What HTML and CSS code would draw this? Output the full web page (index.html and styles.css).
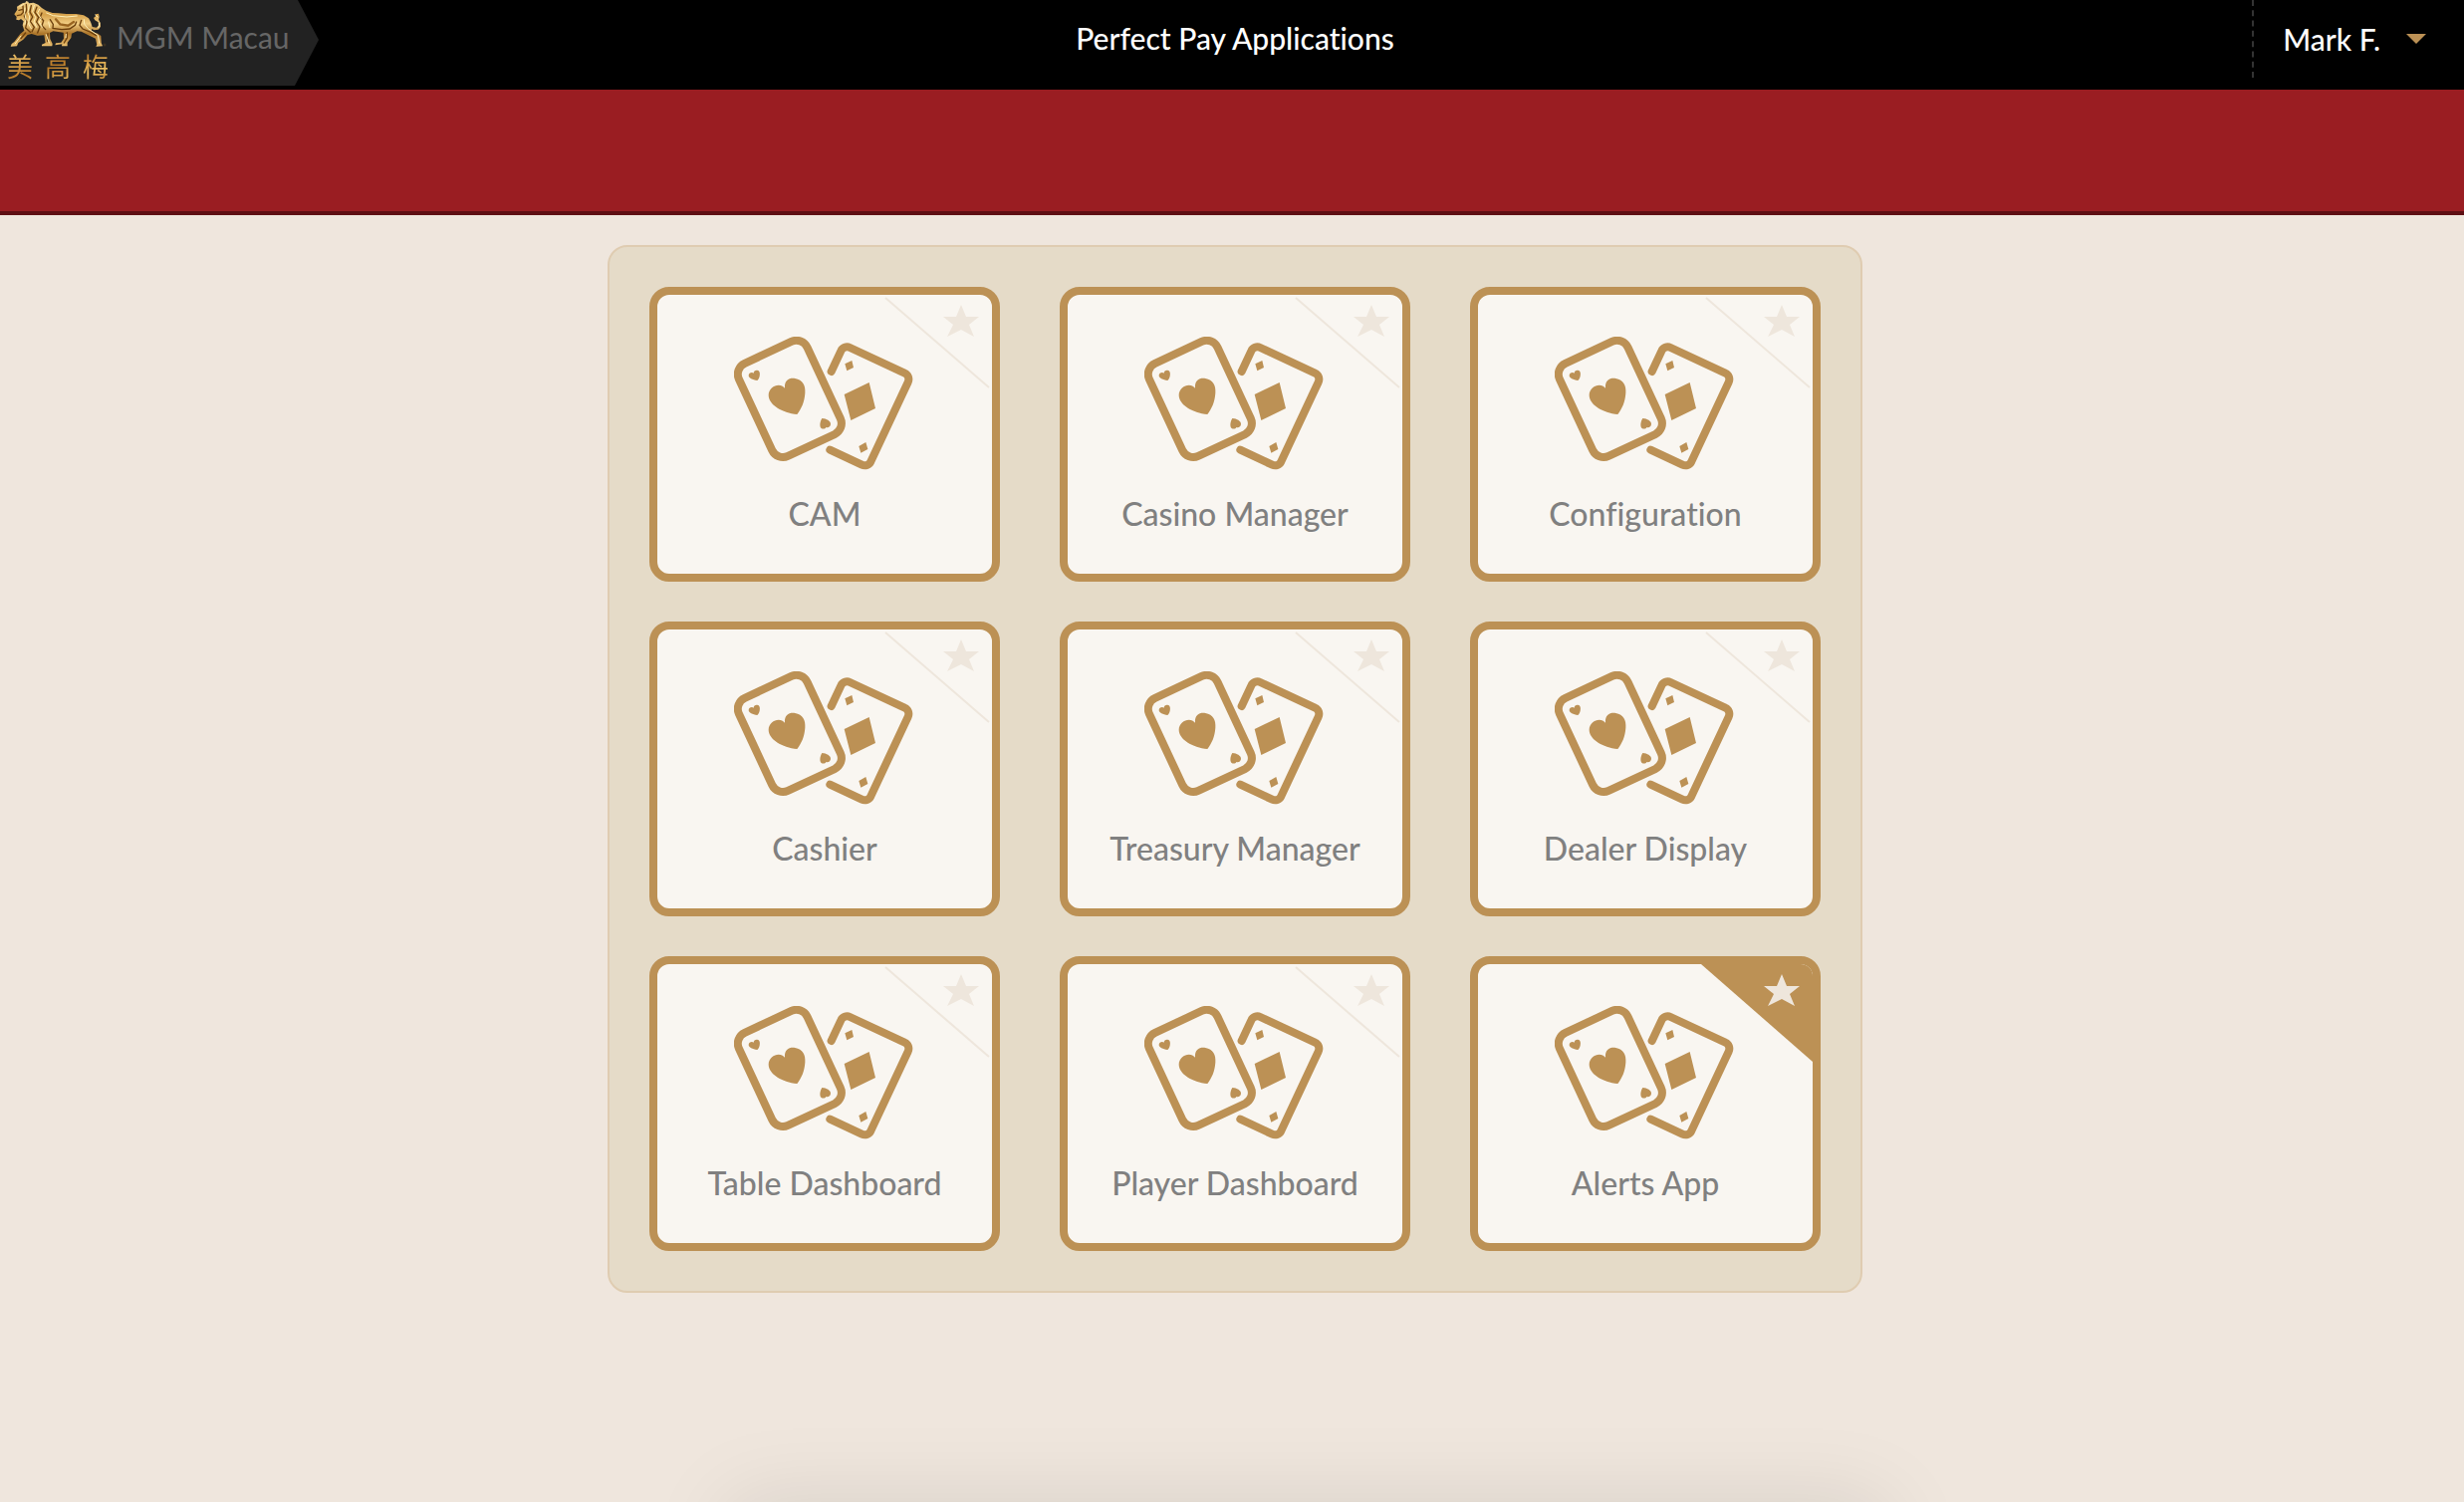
FILE: index.html
```html
<!DOCTYPE html>
<html lang="en">
<head>
<meta charset="utf-8">
<meta name="viewport" content="width=device-width, initial-scale=1">
<title>Perfect Pay Applications</title>
<link rel="stylesheet" href="styles.css">
</head>
<body>
<svg class="defs" aria-hidden="true">
  <symbol id="cards" viewBox="51 54 540 402">
    <g fill="none" stroke="currentColor" stroke-width="24" stroke-linecap="round">
      <rect x="105" y="87" width="227" height="308" rx="36" transform="rotate(-25 219 241)"/>
      <path d="M344 159L373 97A20 20 0 0 1 400 87L565 164A20 20 0 0 1 575 191L463 430A20 20 0 0 1 436 440L340 395"/>
    </g>
    <g fill="currentColor">
      <path d="M241 288C196 283 155 259 155 230C155 203 190 190 204 209C202 183 220 177 235 180C258 184 267 201 265 224C263 252 255 268 241 288Z"/>
      <path d="M121 186C107 184 95 179 95 171C95 162 106 160 110 164C110 157 117 154 123 156C130 158 129 168 128 173C127 179 124 182 121 186Z"/>
      <path d="M316 300C330 301 342 308 342 317C342 325 334 330 328 327C326 333 317 333 313 329C308 324 310 309 316 300Z"/>
      <path d="M458 192L477 270L403 306L383 228ZM406 126L411 147L391 157L385 136ZM448 372L454 393L433 404L427 384Z"/>
    </g>
  </symbol>
  <symbol id="corner" viewBox="0 0 112 98">
    <path class="corner-fill" d="M0 0H112V98Z"/>
    <path class="corner-line" d="M5 3L109 93"/>
    <path class="corner-star" d="M81 10L86 22H99L89 30L94 42L81 35L67 42L73 30L63 22H76Z"/>
  </symbol>
</svg>

<header class="topbar">
  <a class="brand" href="#">
    <span class="logo">
      <svg class="lion" viewBox="30 0 294 144" role="img" aria-label="Lion">
        <defs>
          <linearGradient id="gold" x1="0" y1="0" x2="0" y2="1">
            <stop offset="0" stop-color="#f3d591"/><stop offset=".3" stop-color="#d6a24c"/>
            <stop offset=".5" stop-color="#f1cd83"/><stop offset=".72" stop-color="#ac7428"/><stop offset="1" stop-color="#edc272"/>
          </linearGradient>
        </defs>
        <path fill="url(#gold)" d="M43 43L52 29L51 20L60 14L69 9L76 8L79 3L85 5L87 10L101 8L115 14L126 24L139 32L158 39L176 40L200 42L229 42L252 46L267 55L273 66L278 81L290 83L297 77L296 67L286 61L282 54L288 49L288 43L297 41L299 51L297 59L302 68L303 80L296 89L284 91L276 87L276 95L295 101L304 108L305 129L309 139L289 140L292 134L288 116L266 106L245 95L232 94L216 101L214 114L203 128L203 139L186 139L187 133L166 136L168 130L184 128L192 116L191 98L160 94L150 99L151 117L158 132L157 139L126 139L126 134L137 129L133 106L113 107L95 102L83 105L70 119L55 129L51 139L32 140L35 132L43 126L61 102L73 92L68 76L71 64L63 57L57 61L49 59L50 51Z"/>
        <g fill="none" stroke-linecap="round">
          <g stroke="#6b3f0d" stroke-width="4">
            <path d="M57 31L66 29M52 47L63 45L70 37L69 18M79 13L80 31L73 48L81 66L77 84L91 97M94 17L90 36L98 51L91 64L103 82L96 96M111 21L105 37L116 52L110 66L120 81L113 99M126 39L121 52L131 62L126 77L137 89"/>
            <path d="M151 59L160 73L159 85L186 89L210 87L226 76L230 66M245 61L240 76L249 87L271 96L289 106M202 98L202 114L193 129M144 101L143 125M77 99L63 116"/>
          </g>
          <g stroke="#fff0b8" stroke-width="3">
            <path d="M60 19L70 14M75 24L74 38L78 58L75 73M88 15L84 37L89 51L86 72L94 86M103 16L98 35L107 52L102 66L110 82M119 28L113 39L124 56L118 66L127 82"/>
            <path d="M140 39L160 47L201 51L232 48M146 66L150 83M253 59L254 72L265 86L295 106L299 130M63 108L46 131M139 104L148 129M199 103L198 113M287 45L294 51M299 70L297 84"/>
          </g>
          <path stroke="#9a6521" stroke-width="7" d="M168 58L181 73L205 77L222 66"/>
        </g>
        <circle cx="315" cy="135" r="3" fill="none" stroke="#795625"/>
      </svg>
      <span class="hanzi" lang="zh-Hant"><span>美</span><span>高</span><span>梅</span></span>
    </span>
    <span class="brand-name">MGM Macau</span>
  </a>
  <h1 class="title">Perfect Pay Applications</h1>
  <button class="user" type="button">Mark F.<span class="caret"></span></button>
</header>
<div class="band"></div>

<main class="main">
  <ul class="panel">
    <li class="tile"><a class="app" href="#"><svg class="cards"><use href="#cards"/></svg>CAM</a><button class="fav" type="button" aria-label="Favourite CAM"><svg><use href="#corner"/></svg></button></li>
    <li class="tile"><a class="app" href="#"><svg class="cards"><use href="#cards"/></svg>Casino Manager</a><button class="fav" type="button" aria-label="Favourite Casino Manager"><svg><use href="#corner"/></svg></button></li>
    <li class="tile"><a class="app" href="#"><svg class="cards"><use href="#cards"/></svg>Configuration</a><button class="fav" type="button" aria-label="Favourite Configuration"><svg><use href="#corner"/></svg></button></li>
    <li class="tile"><a class="app" href="#"><svg class="cards"><use href="#cards"/></svg>Cashier</a><button class="fav" type="button" aria-label="Favourite Cashier"><svg><use href="#corner"/></svg></button></li>
    <li class="tile"><a class="app" href="#"><svg class="cards"><use href="#cards"/></svg>Treasury Manager</a><button class="fav" type="button" aria-label="Favourite Treasury Manager"><svg><use href="#corner"/></svg></button></li>
    <li class="tile"><a class="app" href="#"><svg class="cards"><use href="#cards"/></svg>Dealer Display</a><button class="fav" type="button" aria-label="Favourite Dealer Display"><svg><use href="#corner"/></svg></button></li>
    <li class="tile"><a class="app" href="#"><svg class="cards"><use href="#cards"/></svg>Table Dashboard</a><button class="fav" type="button" aria-label="Favourite Table Dashboard"><svg><use href="#corner"/></svg></button></li>
    <li class="tile"><a class="app" href="#"><svg class="cards"><use href="#cards"/></svg>Player Dashboard</a><button class="fav" type="button" aria-label="Favourite Player Dashboard"><svg><use href="#corner"/></svg></button></li>
    <li class="tile"><a class="app" href="#"><svg class="cards"><use href="#cards"/></svg>Alerts App</a><button class="fav fav-on" type="button" aria-pressed="true" aria-label="Favourite Alerts App"><svg><use href="#corner"/></svg></button></li>
  </ul>
</main>
<div class="drawer"></div>
</body>
</html>
```
FILE: styles.css
```css
* { box-sizing: border-box; }

body {
  margin: 0;
  min-height: 100vh;
  background: #efe6dd;
  font-family: Lato, "Liberation Sans", sans-serif;
  font-variant-ligatures: none;
  overflow-x: hidden;
}

.defs { position: absolute; width: 0; height: 0; }

/* Top bar */
.topbar {
  display: grid;
  grid-template-columns: 1fr auto 1fr;
  height: 90px;
  background: #000;
}

.brand {
  display: flex;
  justify-self: start;
  width: 320px;
  height: 86px;
  background: #222;
  clip-path: polygon(0 0, 299px 0, 100% 40px, 296px 100%, 0 100%);
  color: #666;
  text-decoration: none;
}

.logo { width: 117px; padding-left: 7px; }

.lion { display: block; width: 98px; height: 48px; margin-left: 3px; }

.hanzi {
  display: flex;
  gap: 12px;
  margin-top: 3px;
  font: 400 26px/30px "Noto Sans CJK TC", sans-serif;
  background: linear-gradient(160deg, #f6cf75, #b87826 45%, #f0c364 75%, #a96b1d);
  background-clip: text;
  -webkit-background-clip: text;
  color: transparent;
}

.brand-name { font-size: 30px; line-height: 74px; }

.title {
  margin: 0 0 0 6px;
  color: #fff;
  font-size: 30px;
  font-weight: 500;
  line-height: 76px;
}

.user {
  display: flex;
  align-items: center;
  justify-self: end;
  gap: 26px;
  height: 78px;
  padding: 0 38px 0 29px;
  border: 0;
  border-left: 2px dashed #333;
  background: none;
  color: #fff;
  font: 500 30px/76px Lato, "Liberation Sans", sans-serif;
}

.caret {
  border: 10px solid transparent;
  border-top-color: #bc9155;
  border-bottom: 0;
}

.band {
  height: 126px;
  background: #9a1d22;
  border-bottom: 4px solid #5e0f13;
}

/* Application grid */
.main {
  display: flex;
  justify-content: center;
  padding: 30px 0 30px 6px;
}

.panel {
  display: grid;
  grid-template-columns: repeat(3, 352px);
  gap: 40px 60px;
  margin: 0;
  padding: 40px;
  list-style: none;
  background: #e5dbc8;
  border: 2px solid #dfccb1;
  border-radius: 20px;
}

.tile { position: relative; }

.app {
  display: flex;
  flex-direction: column;
  align-items: center;
  gap: 24px;
  height: 296px;
  padding-top: 42px;
  background: #f9f6f1;
  border: 8px solid #bc9155;
  border-radius: 20px;
  color: #808080;
  font-size: 32px;
  font-weight: 500;
  line-height: 40px;
  text-decoration: none;
}

.cards { width: 180px; height: 134px; margin-right: 2px; color: #bc9155; }

.fav {
  position: absolute;
  top: 8px;
  right: 8px;
  width: 112px;
  height: 98px;
  padding: 0;
  border: 0;
  border-radius: 0 12px 0 0;
  background: none;
  overflow: hidden;
  --fill: none;
  --line: #eee6dc;
}

.fav-on { --fill: #bc9155; --line: none; }

.fav svg { display: block; width: 100%; height: 100%; }

.corner-fill { fill: var(--fill); }
.corner-line { fill: none; stroke: var(--line); stroke-width: 2; }
.corner-star { fill: #eee6dc; }

.drawer {
  position: fixed;
  top: 100%;
  left: 50%;
  width: 1160px;
  height: 400px;
  margin-left: -504px;
  box-shadow: 0 0 80px rgba(0, 0, 0, .1);
}
```
